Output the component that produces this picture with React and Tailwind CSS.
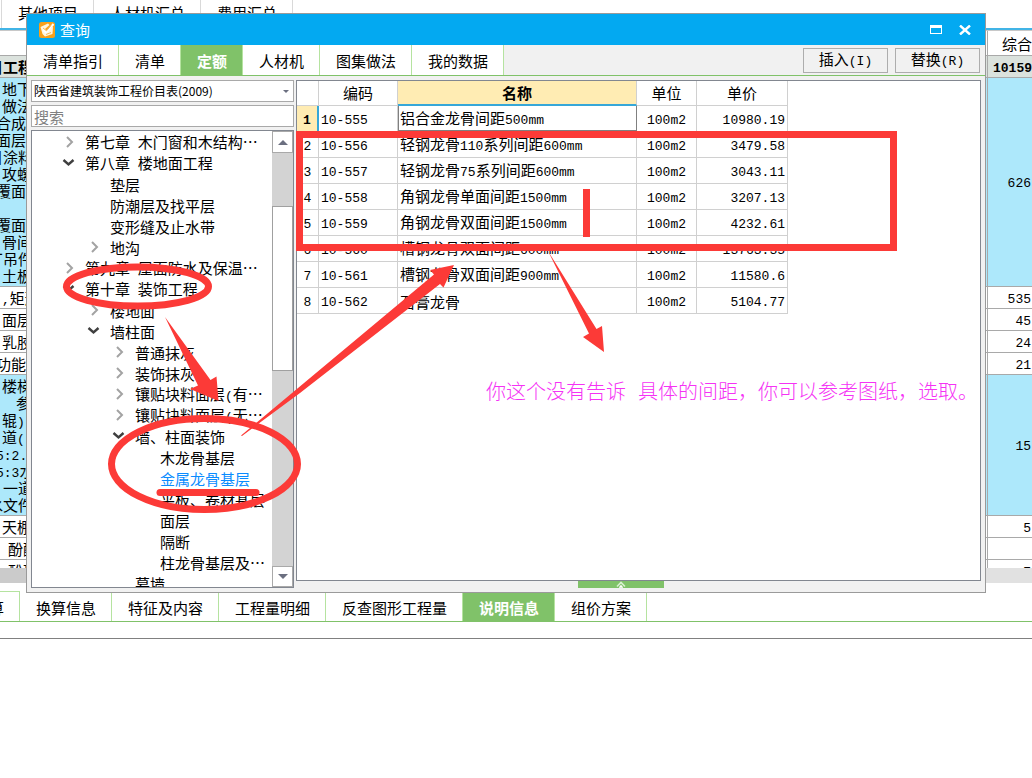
import { useState } from "react";

const sheetTabs = ["其他项目", "人材机汇总", "费用汇总"];

const dialogTabs = ["清单指引", "清单", "定额", "人材机", "图集做法", "我的数据"];

const detailTabs = ["换算信息", "特征及内容", "工程量明细", "反查图形工程量", "说明信息", "组价方案"];

const indent = {
  cut: "-ml-3",
  half: "-ml-1",
  none: "ml-0.5",
  deep: "ml-2",
  far: "ml-4",
};

const sheetRows = [
  {
    height: "h-[209px]",
    filled: true,
    price: "626",
    lines: [
      ["none", "地下"], ["none", "做法"], ["half", "合成"], ["half", "面层"],
      ["cut", "目涂料"], ["none", "攻螺"], ["half", "覆面"], ["none", ""],
      ["half", "覆面"], ["none", "骨间"], ["cut", "丁吊件"], ["none", "土板"],
    ],
  },
  { height: "h-[22px]", price: "535", lines: [["none", ",矩形"]] },
  { height: "h-[22px]", price: "45", lines: [["none", "面层"]] },
  { height: "h-[22px]", price: "24", lines: [["none", "乳胶"]] },
  { height: "h-[22px]", price: "21", lines: [["half", "功能:"]] },
  {
    height: "h-[141px]",
    filled: true,
    price: "15",
    lines: [
      ["none", "楼梯"], ["far", "参"], ["none", "辊)"], ["none", "道("],
      ["half", "5:2."], ["half", "5:3水"], ["cut", "、一道"], ["cut", "水文件"],
    ],
  },
  { height: "h-[22px]", price: "5", lines: [["none", "天棚"]] },
  { height: "h-[22px]", price: "", lines: [["deep", "酚醛"]] },
  { height: "h-[22px]", price: "7", lines: [["deep", "酚醛"]] },
];

const levelPad = {
  1: "pl-[30px]",
  2: "pl-[55px]",
  3: "pl-[80px]",
  4: "pl-[105px]",
};

const tree = [
  { level: 1, state: "closed", label: "第七章 木门窗和木结构…" },
  { level: 1, state: "open", label: "第八章 楼地面工程" },
  { level: 2, label: "垫层" },
  { level: 2, label: "防潮层及找平层" },
  { level: 2, label: "变形缝及止水带" },
  { level: 2, state: "closed", label: "地沟" },
  { level: 1, state: "closed", label: "第九章 屋面防水及保温…" },
  { level: 1, state: "open", label: "第十章 装饰工程" },
  { level: 2, state: "closed", label: "楼地面" },
  { level: 2, state: "open", label: "墙柱面" },
  { level: 3, state: "closed", label: "普通抹灰" },
  { level: 3, state: "closed", label: "装饰抹灰" },
  { level: 3, state: "closed", label: "镶贴块料面层(有…" },
  { level: 3, state: "closed", label: "镶贴块料面层(无…" },
  { level: 3, state: "open", label: "墙、柱面装饰" },
  { level: 4, label: "木龙骨基层" },
  { level: 4, label: "金属龙骨基层" },
  { level: 4, label: "平板、卷材基层" },
  { level: 4, label: "面层" },
  { level: 4, label: "隔断" },
  { level: 4, label: "柱龙骨基层及…" },
  { level: 3, label: "幕墙" },
];

const quotas = [
  ["10-555", "铝合金龙骨间距500mm", "10980.19"],
  ["10-556", "轻钢龙骨110系列间距600mm", "3479.58"],
  ["10-557", "轻钢龙骨75系列间距600mm", "3043.11"],
  ["10-558", "角钢龙骨单面间距1500mm", "3207.13"],
  ["10-559", "角钢龙骨双面间距1500mm", "4232.61"],
  ["10-560", "槽钢龙骨双面间距600mm", "13763.35"],
  ["10-561", "槽钢龙骨双面间距900mm", "11580.6"],
  ["10-562", "石膏龙骨", "5104.77"],
];

// Latin runs are set in the monospace face, Chinese keeps the full-width one
function Mixed({ text }) {
  return text.split(/([\x20-\x7e]+)/).map((part, i) =>
    i % 2 ? (
      <span key={i} className="font-['Liberation_Mono',monospace] text-[13px] whitespace-pre">{part}</span>
    ) : (
      part
    )
  );
}

function Chevron({ state }) {
  if (state === "open") {
    return (
      <svg width="13" height="13" viewBox="0 0 13 13" fill="none" stroke="#3f3f3f" strokeWidth="2.4">
        <path d="M1.5 3 L6.5 7.5 L11.5 3" />
      </svg>
    );
  }
  return (
    <svg width="13" height="13" viewBox="0 0 13 13" fill="none" stroke="#a3a3a3" strokeWidth="2">
      <path d="M5 1 L10 6 L5 11" />
    </svg>
  );
}

function Triangle({ up, small }) {
  const size = small ? 6 : 10;
  return (
    <svg width={size} height={size / 2} viewBox="0 0 10 5" fill="#6b6f80">
      <path d={up ? "M0 5 L5 0 L10 5 Z" : "M0 0 L10 0 L5 5 Z"} />
    </svg>
  );
}

function AppIcon() {
  return (
    <svg width="16" height="16" viewBox="0 0 16 16">
      <rect width="16" height="16" rx="2.5" fill="#f9a11b" />
      <path d="M1.5 5 L9 1.5 L10.5 3 L6 7 L8 9 L14 4.5 L13.5 12 L6 14.5 L3.5 12 Z" fill="#fff6e0" />
      <path d="M4 8 L7 10.5 L14.5 2" fill="none" stroke="#fff" strokeWidth="2" />
      <path d="M4 6 L7.5 8.8 L12 3.5 M7 12.5 L12 10.5" fill="none" stroke="#f2a73a" strokeWidth="0.8" />
    </svg>
  );
}

function Tabs({ tabs, active, onSelect, className }) {
  return (
    <div className={`flex ${className}`}>
      {tabs.map((tab) => (
        <button
          key={tab}
          onClick={() => onSelect(tab)}
          className={`shrink-0 border-r border-[#b5e3a0] pl-4 pr-[15px] pt-0.5 leading-5 ${
            tab === active ? "bg-[#80c269] font-bold text-white" : "bg-white"
          }`}
        >
          {tab}
        </button>
      ))}
    </div>
  );
}

function Sheet() {
  return (
    <div className="h-[538px] overflow-hidden border-t border-[#c8c8c8]">
      <table className="w-full table-fixed border-separate border-spacing-0 leading-[17px]">
        <thead>
          <tr className="h-[25px]">
            <th className="border-r border-b border-[#a9a9a9] p-0"></th>
            <th className="w-[44px] border-b border-[#a9a9a9] p-0 text-right font-normal">综合</th>
          </tr>
          <tr className="h-[22px] bg-[#dbe2dd]">
            <th className="overflow-hidden border-r border-b border-[#a9a9a9] p-0 text-left">
              <div className="-ml-3">目工程</div>
            </th>
            <th className="border-b border-[#a9a9a9] p-0 text-right"><Mixed text="10159" /></th>
          </tr>
        </thead>
        <tbody>
          {sheetRows.map((row, i) => (
            <tr key={i} className={`${row.height} ${row.filled ? "bg-[#ade8fb]" : "bg-white"}`}>
              <td className="overflow-hidden border-r border-b border-[#a9a9a9] p-0 whitespace-nowrap">
                {row.lines.map(([pad, text], n) => (
                  <div key={n} className={`h-[17px] ${indent[pad]}`}><Mixed text={text} /></div>
                ))}
              </td>
              <td className="border-b border-[#a9a9a9] p-0 pr-px text-right"><Mixed text={row.price} /></td>
            </tr>
          ))}
        </tbody>
      </table>
    </div>
  );
}

function QuotaTree({ selected, onSelect }) {
  return (
    <div className="flex h-[458px] overflow-hidden border border-[#828790] bg-white">
      <ul className="min-w-0 flex-1 pt-px">
        {tree.map((node) => (
          <li key={node.label} className={levelPad[node.level]}>
            <button
              onClick={() => onSelect(node.label)}
              className={`flex h-[21px] items-center whitespace-nowrap leading-[21px] ${
                node.label === selected ? "text-[#0a8cff]" : ""
              }`}
            >
              <span className="w-[23px] shrink-0">{node.state && <Chevron state={node.state} />}</span>
              <span><Mixed text={node.label} /></span>
            </button>
          </li>
        ))}
      </ul>
      <div className="flex w-[21px] flex-col bg-[#d3d3d3]">
        <button aria-label="向上" className="flex h-[22px] items-center justify-center border border-[#a9a9a9] bg-white">
          <Triangle up />
        </button>
        <div className="mt-[53px] h-[165px] border border-[#a0a0a0] bg-white" />
        <button aria-label="向下" className="mt-auto flex h-[21px] items-center justify-center border border-[#a9a9a9] bg-white">
          <Triangle />
        </button>
      </div>
    </div>
  );
}

function QuotaTable() {
  const head = "border-r border-b border-[#d0d0d0] p-0 leading-5";
  const cell = "border-r border-b border-[#d0d0d0] p-0 pt-0.5";
  return (
    <table className="w-[491px] table-fixed border-separate border-spacing-0">
      <thead>
        <tr className="h-[25px]">
          <th className={`${head} w-[22px]`}></th>
          <th className={`${head} w-[79px] font-normal`}>编码</th>
          <th className="w-[239px] border-r border-b-2 border-r-[#d0d0d0] border-b-[#36a7d8] bg-[#ffecb3] p-0 leading-5">名称</th>
          <th className={`${head} w-[60px] font-normal`}>单位</th>
          <th className={`${head} w-[91px] font-normal`}>单价</th>
        </tr>
      </thead>
      <tbody className="leading-[18px]">
        {quotas.map(([code, name, price], i) => (
          <tr key={code} className="h-[26px]">
            <td
              className={`p-0 pt-0.5 text-center ${
                i === 0
                  ? "border-r-2 border-b border-r-[#36a7d8] border-b-[#d0d0d0] bg-[#ffecb3] font-bold"
                  : "border-r border-b border-[#d0d0d0]"
              }`}
            >
              <Mixed text={String(i + 1)} />
            </td>
            <td className={`${cell} pl-0.5`}><Mixed text={code} /></td>
            <td
              className={`whitespace-nowrap p-0 pt-0.5 ${
                i === 0 ? "border-x border-b-2 border-[#808080] pl-px" : "border-r border-b border-[#d0d0d0] pl-0.5"
              }`}
            >
              <Mixed text={name} />
            </td>
            <td className={`${cell} text-center`}><Mixed text="100m2" /></td>
            <td className={`${cell} pr-0.5 text-right`}><Mixed text={price} /></td>
          </tr>
        ))}
      </tbody>
    </table>
  );
}

function QueryDialog() {
  const [tab, setTab] = useState("定额");
  const [node, setNode] = useState("金属龙骨基层");

  return (
    <section className="absolute top-[13px] right-[46px] left-[26px] border border-[#9a9a9a] bg-[#f1f1f1]">
      <header className="flex h-[31px] items-center bg-[#03a9f1] pr-[14px] pl-3 text-white">
        <AppIcon />
        <h1 className="ml-[5px] flex-1 leading-5">查询</h1>
        <button aria-label="最大化" className="mr-[17px]">
          <svg width="12" height="9" viewBox="0 0 12 9">
            <path d="M0 0 H12 V9 H0 Z M1 3 V8 H11 V3 Z" fill="#fff" fillRule="evenodd" />
          </svg>
        </button>
        <button aria-label="关闭">
          <svg width="12" height="10" viewBox="0 0 12 10" stroke="#fff" strokeWidth="2.4">
            <path d="M1 0.5 L11 9.5 M11 0.5 L1 9.5" />
          </svg>
        </button>
      </header>

      <div className="flex h-[31px] justify-between border-b border-[#80c269]">
        <Tabs tabs={dialogTabs} active={tab} onSelect={setTab} className="h-[30px]" />
        <div className="flex gap-[7px] pt-[3px] pr-[5px]">
          <button className="h-[25px] w-[85px] border border-[#adadad] leading-5"><Mixed text="插入(I)" /></button>
          <button className="h-[25px] w-[85px] border border-[#adadad] leading-5"><Mixed text="替换(R)" /></button>
        </div>
      </div>

      <div className="flex gap-0.5 px-1 pt-1 pb-1">
        <div className="flex w-[263px] shrink-0 flex-col gap-[3px]">
          <div className="relative">
            <select
              aria-label="定额库"
              className="block h-[22px] w-full appearance-none border border-[#a9a9a9] bg-white pl-0.5 text-xs"
            >
              <option>陕西省建筑装饰工程价目表(2009)</option>
            </select>
            <span className="pointer-events-none absolute top-2.5 right-[5px]"><Triangle small /></span>
          </div>
          <input
            aria-label="搜索"
            placeholder="搜索"
            className="block h-[22px] w-full border border-[#a9a9a9] bg-white pl-0.5 leading-5 placeholder:text-[#808080]"
          />
          <QuotaTree selected={node} onSelect={setNode} />
        </div>
        <div className="flex min-w-0 flex-1 flex-col">
          <div className="h-[501px] border border-[#828790] bg-white">
            <QuotaTable />
          </div>
          <button aria-label="展开" className="ml-[282px] flex h-[7px] w-[86px] items-center justify-center bg-[#80c269]">
            <svg width="10" height="7" viewBox="0 0 10 7" fill="none" stroke="#d9f0d0" strokeWidth="1.6">
              <path d="M1 5.5 L5 1.5 L9 5.5" />
              <path d="M3.5 6.8 L5 5 L6.5 6.8" stroke="#fff" />
            </svg>
          </button>
        </div>
      </div>
    </section>
  );
}

// Pen marks lying over the whole window
function Marks() {
  return (
    <div className="pointer-events-none absolute top-0 left-0">
      <svg width="1000" height="580" viewBox="0 0 1000 580" fill="none" stroke="#fc3a37" strokeWidth="7">
        <rect x="299.5" y="134.5" width="594" height="113" />
        <path d="M586.5 189 V237" />
        <ellipse cx="137.5" cy="286.5" rx="71" ry="19.5" />
        <ellipse cx="204.5" cy="464" rx="93" ry="45.5" />
        <path d="M160 492.5 H256" strokeLinecap="round" />
        <g fill="#fc3a37" stroke="none">
          <path d="M165 317 L210.5 380 L216.5 376.5 L218.5 401 L190 389 L198 385.5 Z" />
          <path d="M241 435.5 L434 274.5 L430 270 L454 265 L443.5 287.5 L440 284 L300 393 L242 436 Z" />
          <path d="M548 251 L596.5 329 L602 326 L604 352 L583 337 L589 333.5 Z" />
        </g>
      </svg>
      <p className="absolute top-[380px] left-[486px] font-['Liberation_Mono','Noto_Sans_CJK_SC',monospace] text-xl font-light whitespace-nowrap text-[#f532f5]">
        你这个没有告诉 具体的间距，你可以参考图纸，选取。
      </p>
    </div>
  );
}

export default function App() {
  const [detail, setDetail] = useState("说明信息");

  return (
    <div className="relative min-h-screen overflow-hidden bg-white font-['Noto_Sans_CJK_SC',sans-serif] text-[15px] text-black">
      <nav className="flex h-[30px] border-b-2 border-[#41b4e6] pl-px">
        {sheetTabs.map((tab) => (
          <a
            key={tab}
            href="#"
            className="border-l border-[#d9d9d9] pl-4 pr-[15px] pt-0.5 leading-[22px] last:border-r"
          >
            {tab}
          </a>
        ))}
      </nav>
      <Sheet />
      <div className="flex h-[15px]">
        <div className="w-1/2 bg-[#cbcbcb]" />
        <div className="flex-1 bg-[#e1e1e1]" />
      </div>

      <div className="mt-2 flex h-[31px] border-b border-[#80c269]">
        <div className="flex w-5 justify-end overflow-hidden border-t border-r border-[#b5e3a0] pt-1 pr-[15px] leading-6">算</div>
        <Tabs tabs={detailTabs} active={detail} onSelect={setDetail} className="pt-px" />
      </div>
      <div className="h-[17px] border-b border-[#808080]" />

      <QueryDialog />
      <Marks />
    </div>
  );
}
